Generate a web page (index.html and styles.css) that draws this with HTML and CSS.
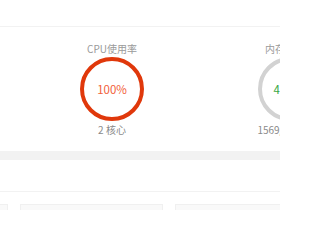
FILE: index.html
```html
<!DOCTYPE html>
<html lang="zh-CN">
<head>
<meta charset="utf-8">
<link rel="stylesheet" href="styles.css">
</head>
<body>
<div class="page">
  <div class="header"></div>
  <div class="stats">
    <div class="gauge">
      <div class="gauge-title">CPU使用率</div>
      <div class="ring">
        <svg width="64" height="64" viewBox="0 0 64 64">
          <circle cx="32" cy="32" r="30" fill="none" stroke="#e0380b" stroke-width="4"/>
        </svg>
        <span class="ring-value hot">100%</span>
      </div>
      <div class="gauge-sub">2 核心</div>
    </div>
    <div class="gauge">
      <div class="gauge-title">内存使用率</div>
      <div class="ring">
        <svg width="64" height="64" viewBox="0 0 64 64">
          <circle cx="32" cy="32" r="30" fill="none" stroke="#d2d2d2" stroke-width="4"/>
          <circle cx="32" cy="32" r="30" fill="none" stroke="#4caf50" stroke-width="4" stroke-dasharray="78 200" transform="rotate(-90 32 32)"/>
        </svg>
        <span class="ring-value ok">41.4%</span>
      </div>
      <div class="gauge-sub">1569/3789 MB</div>
    </div>
  </div>
  <div class="band"></div>
  <div class="section-head"></div>
  <div class="cards">
    <div class="card"></div>
    <div class="card"></div>
    <div class="card"></div>
  </div>
</div>
</body>
</html>
```
FILE: styles.css
```css
html, body {
  margin: 0;
  padding: 0;
  width: 280px;
  height: 210px;
  overflow: hidden;
  background: #ffffff;
  font-family: "Microsoft YaHei", "Noto Sans CJK SC", "Noto Sans", sans-serif;
}
.page {
  width: 280px;
  height: 210px;
  overflow: hidden;
}
.header {
  height: 26px;
  border-bottom: 1px solid #f2f2f2;
}
.stats {
  height: 124px;
  box-sizing: border-box;
  padding: 15px 0 0 23px;
  display: flex;
}
.gauge {
  flex: 0 0 178px;
  display: flex;
  flex-direction: column;
  align-items: center;
}
.gauge-title {
  font-size: 10px;
  line-height: 14px;
  color: #9a9a9a;
  white-space: nowrap;
}
.ring {
  position: relative;
  width: 64px;
  height: 64px;
  margin-top: 1px;
}
.ring svg {
  display: block;
}
.ring-value {
  position: absolute;
  inset: 0;
  display: flex;
  align-items: center;
  justify-content: center;
  font-size: 11.5px;
  white-space: nowrap;
}
.hot { color: #f2603a; }
.ok { color: #3aa845; }
.gauge-sub {
  margin-top: 2px;
  font-size: 10px;
  line-height: 14px;
  color: #8a8a8a;
  white-space: nowrap;
}
.band {
  height: 9px;
  background: #f2f2f2;
}
.section-head {
  height: 31px;
  border-bottom: 1px solid #f2f2f2;
}
.cards {
  display: flex;
  gap: 12px;
  padding-top: 12px;
  margin-left: -135px;
}
.card {
  flex: 0 0 143px;
  height: 6px;
  box-sizing: border-box;
  background: #f9f9f9;
  border: 1px solid #f0f0f0;
  border-bottom: none;
}
```
